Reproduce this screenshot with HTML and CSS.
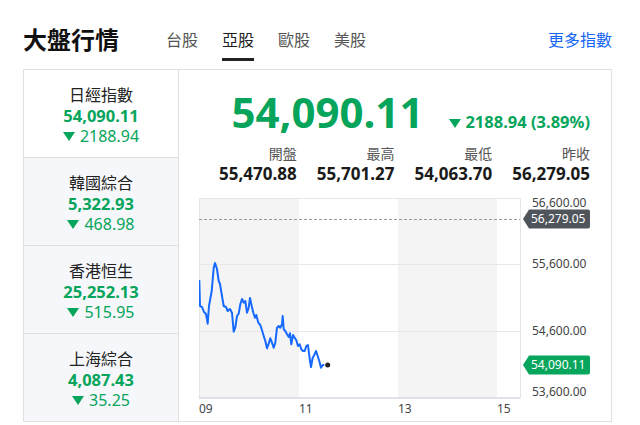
FILE: index.html
```html
<!DOCTYPE html>
<html lang="zh-Hant">

<head>
    <meta charset="UTF-8">
    <title>大盤行情</title>
    <link rel="stylesheet" href="styles.css">
</head>

<body>
    <div class="page">
        <header class="head">
            <h1 class="title">大盤行情</h1>
            <nav class="tabs">
                <a class="tab">台股</a>
                <a class="tab on">亞股</a>
                <a class="tab">歐股</a>
                <a class="tab">美股</a>
            </nav>
            <a class="more">更多指數</a>
        </header>

        <section class="card">
            <ul class="idx-list">
                <li class="idx on">
                    <div class="idx-name">日經指數</div>
                    <div class="idx-val">54,090.11</div>
                    <div class="idx-chg"><i class="down"></i>2188.94</div>
                </li>
                <li class="idx">
                    <div class="idx-name">韓國綜合</div>
                    <div class="idx-val">5,322.93</div>
                    <div class="idx-chg"><i class="down"></i>468.98</div>
                </li>
                <li class="idx">
                    <div class="idx-name">香港恒生</div>
                    <div class="idx-val">25,252.13</div>
                    <div class="idx-chg"><i class="down"></i>515.95</div>
                </li>
                <li class="idx">
                    <div class="idx-name">上海綜合</div>
                    <div class="idx-val">4,087.43</div>
                    <div class="idx-chg"><i class="down"></i>35.25</div>
                </li>
            </ul>

            <div class="detail">
                <div class="quote">
                    <span class="price">54,090.11</span>
                    <span class="diff"><i class="down"></i>2188.94 (3.89%)</span>
                </div>

                <div class="stats">
                    <div class="stat"><span class="stat-lbl">開盤</span><b class="stat-val">55,470.88</b></div>
                    <div class="stat"><span class="stat-lbl">最高</span><b class="stat-val">55,701.27</b></div>
                    <div class="stat"><span class="stat-lbl">最低</span><b class="stat-val">54,063.70</b></div>
                    <div class="stat"><span class="stat-lbl">昨收</span><b class="stat-val">56,279.05</b></div>
                </div>

                <!-- 走勢圖：座標直接用頁面上的位置，外層 g 平移回來 -->
                <svg class="chart" width="392" height="226" viewBox="0 0 392 226">
                    <g transform="translate(-198,-192)">
                        <rect class="band" x="198" y="197" width="100" height="200" />
                        <rect class="band" x="397" y="197" width="99" height="200" />
                        <rect class="frame" x="198.5" y="197.5" width="321" height="199.5" />
                        <line class="grid" x1="198" y1="263.5" x2="519" y2="263.5" />
                        <line class="grid" x1="198" y1="330.5" x2="519" y2="330.5" />
                        <line class="axis" x1="198" y1="397" x2="519" y2="397" />
                        <line class="prev" x1="198" y1="218.5" x2="519" y2="218.5" />

                        <polyline class="line" points="198.3,279 199,305 201,306 203,311 205,313 206.7,322.7 208,305 210.7,290 212.7,267 214,262 216,268 217.7,280 219,283 221,295 222.7,305 225,306 226.7,310 229,308 231,312 232.7,330.7 234.3,326.7 236,315 237.7,312.7 239.3,303.3 241,298 242.7,301.7 244.3,300 246,311.7 247.7,306.7 249,297 250.7,305 252.3,311.7 254,316.7 255.3,314 257.3,321.7 259.3,324 261,329.3 262.7,335 264.3,340 266,347.3 267.7,342.7 269.3,337.3 271,341.7 272.7,346.7 274.3,341.7 276,326.7 277.7,325 279.3,326.7 281,323.3 281.7,315 282.7,328.3 284.3,330 286,333.3 287.7,336 289,332.3 290.3,343.3 292,334 293.7,336.7 295.3,339.3 297,345 298.7,343.3 300.3,348.3 302,350 303.7,350 305.3,345 307,344 308.3,355 310,366 311.7,356.7 313.3,354 315,350 316.7,355 318.3,360 320,366.7 321.7,364 323.3,364" />
                        <circle class="dot" cx="326.7" cy="364" r="2.5" />

                        <text class="ylbl" x="531" y="206">56,600.00</text>
                        <text class="ylbl" x="531" y="267">55,600.00</text>
                        <text class="ylbl" x="531" y="334">54,600.00</text>
                        <text class="ylbl" x="531" y="395">53,600.00</text>

                        <path class="tag tag-prev" d="M522,218 L528,208.5 H587 Q589,208.5 589,210.5 V225.5 Q589,227.5 587,227.5 H528 Z" />
                        <text class="tag-txt" x="530" y="222">56,279.05</text>
                        <path class="tag tag-now" d="M522,364 L528,354.5 H587 Q589,354.5 589,356.5 V371.5 Q589,373.5 587,373.5 H528 Z" />
                        <text class="tag-txt" x="530" y="368">54,090.11</text>

                        <text class="xlbl" x="198" y="412">09</text>
                        <text class="xlbl" x="298" y="412">11</text>
                        <text class="xlbl" x="397" y="412">13</text>
                        <text class="xlbl" x="496" y="412">15</text>
                    </g>
                </svg>
            </div>
        </section>
    </div>
</body>

</html>
```

FILE: styles.css
```css
* {
    margin: 0;
    padding: 0;
    box-sizing: border-box;
}

body {
    background: #fff;
    color: #222;
    font-family: "Noto Sans", "Noto Sans CJK TC", sans-serif;
}

ul {
    list-style: none;
}

.page {
    width: 589px;
    margin-left: 23px;
}

/* 標題列 */
.head {
    display: flex;
    align-items: flex-start;
    padding-top: 28px;
    margin-bottom: 8px;
}

.title {
    font-size: 24px;
    line-height: 24px;
    font-weight: 700;
    color: #111;
    margin-right: 47px;
}

.tabs {
    display: flex;
    gap: 24px;
}

.tab {
    font-size: 16px;
    line-height: 24px;
    color: #555;
    padding-bottom: 6px;
    border-bottom: 3px solid transparent;
}

.tab.on {
    color: #222;
    border-bottom-color: #222;
}

.more {
    margin-left: auto;
    font-size: 16px;
    line-height: 24px;
    color: #1466f5;
}

/* 主卡片 */
.card {
    display: flex;
    border: 1px solid #e0e0e0;
}

.idx-list {
    width: 155px;
    flex: none;
    border-right: 1px solid #e0e0e0;
    background: #f5f7fa;
}

.idx {
    height: 88px;
    border-bottom: 1px solid #e0e0e0;
    display: flex;
    flex-direction: column;
    align-items: center;
    justify-content: center;
    padding-top: 4px;
}

.idx:last-child {
    height: 87px;
    border-bottom: 0;
}

.idx.on {
    background: #fff;
}

.idx-name {
    font-size: 16px;
    line-height: 21px;
    color: #222;
}

.idx-val {
    font-size: 16.5px;
    line-height: 20px;
    font-weight: 700;
    color: #06a55b;
}

.idx-chg {
    display: flex;
    align-items: center;
    font-size: 16px;
    line-height: 20px;
    color: #06a55b;
}

.down {
    width: 0;
    height: 0;
    border-left: 6px solid transparent;
    border-right: 6px solid transparent;
    border-top: 9px solid #06a55b;
    margin-right: 5px;
}

/* 右側明細 */
.detail {
    flex: 1;
    min-width: 0;
    padding: 21px 21px 0 20px;
}

.quote {
    display: flex;
    justify-content: flex-end;
    align-items: baseline;
    gap: 26px;
    color: #06a55b;
}

.price {
    font-size: 42px;
    line-height: 41px;
    font-weight: 700;
}

.diff {
    font-size: 16.5px;
    font-weight: 700;
}

.diff .down {
    display: inline-block;
    margin-right: 4px;
}

.stats {
    display: grid;
    grid-template-columns: repeat(4, 1fr);
    margin-top: 12px;
}

.stat {
    display: flex;
    flex-direction: column;
    align-items: flex-end;
}

.stat-lbl {
    font-size: 14px;
    line-height: 18px;
    color: #555;
}

.stat-val {
    font-size: 17px;
    line-height: 22px;
    color: #1a1a1a;
}

.chart {
    display: block;
    margin-top: 8px;
    font-family: "Noto Sans", sans-serif;
}

.band {
    fill: #f4f4f4;
}

.frame {
    fill: none;
    stroke: #e6e6e6;
}

.grid {
    stroke: #e8e8e8;
}

.axis {
    stroke: #ccd3de;
}

.prev {
    stroke: #999;
    stroke-dasharray: 3 2;
}

.line {
    fill: none;
    stroke: #1669ff;
    stroke-width: 2;
    stroke-linejoin: round;
}

.dot {
    fill: #222;
}

.ylbl,
.xlbl {
    font-size: 12px;
    fill: #444;
}

.tag-prev {
    fill: #50555c;
}

.tag-now {
    fill: #07a65c;
}

.tag-txt {
    font-size: 12px;
    fill: #fff;
}
```
